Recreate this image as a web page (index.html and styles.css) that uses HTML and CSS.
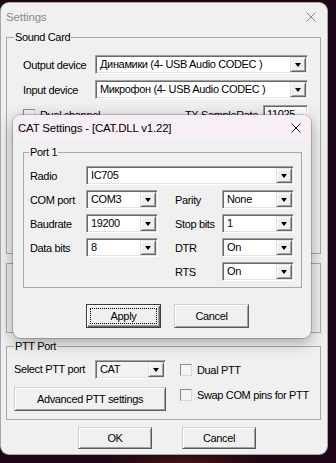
FILE: index.html
```html
<!DOCTYPE html>
<html lang="en">
<head>
<meta charset="UTF-8">
<meta name="viewport" content="width=device-width, initial-scale=1.0">
<title>Settings</title>
<link rel="stylesheet" href="styles.css">
</head>
<body>
<div class="desktop">
  <div class="window">
    <div class="titlebar">
      <span class="title">Settings</span>
      <svg class="close" width="10" height="10" viewBox="0 0 10 10"><path d="M0.5 0.5 L9.5 9.5 M9.5 0.5 L0.5 9.5" stroke="#8c8c8c" stroke-width="1"/></svg>
    </div>

    <fieldset class="group sound">
      <legend>Sound Card</legend>
      <div class="sound-body">
        <div class="row">
          <span class="label">Output device</span>
          <div class="combo"><span class="value">Динамики (4- USB Audio CODEC )</span><span class="drop"></span></div>
        </div>
        <div class="row">
          <span class="label">Input device</span>
          <div class="combo"><span class="value">Микрофон (4- USB Audio CODEC )</span><span class="drop"></span></div>
        </div>
        <div class="row">
          <label class="check"><span class="box"></span>Dual channel</label>
          <span class="tx-label">TX SampleRate</span>
          <div class="field">11025</div>
        </div>
      </div>
    </fieldset>

    <div class="group blank"></div>

    <fieldset class="group ptt">
      <legend>PTT Port</legend>
      <div class="ptt-body">
        <div class="ptt-left">
          <div class="row">
            <span class="label ptt-label">Select PTT port</span>
            <div class="combo gray"><span class="value">CAT</span><span class="drop"></span></div>
          </div>
          <button class="btn wide">Advanced PTT settings</button>
        </div>
        <div class="ptt-right">
          <label class="check first"><span class="box"></span>Dual PTT</label>
          <label class="check second"><span class="box"></span>Swap COM pins for PTT</label>
        </div>
      </div>
    </fieldset>

    <div class="actions">
      <button class="btn">OK</button>
      <button class="btn">Cancel</button>
    </div>

    <div class="dialog">
      <div class="dlg-title">
        <span>CAT Settings - [CAT.DLL v1.22]</span>
        <svg class="close" width="10" height="10" viewBox="0 0 10 10"><path d="M0.5 0.5 L9.5 9.5 M9.5 0.5 L0.5 9.5" stroke="#1a1a1a" stroke-width="1"/></svg>
      </div>
      <fieldset class="group port">
        <legend>Port 1</legend>
        <div class="port-grid">
          <span class="c1">Radio</span>
          <div class="combo wide-col"><span class="value">IC705</span><span class="drop"></span></div>

          <span class="c1">COM port</span>
          <div class="combo c2"><span class="value">COM3</span><span class="drop"></span></div>
          <span class="c4">Parity</span>
          <div class="combo c5"><span class="value">None</span><span class="drop"></span></div>

          <span class="c1">Baudrate</span>
          <div class="combo c2"><span class="value">19200</span><span class="drop"></span></div>
          <span class="c4">Stop bits</span>
          <div class="combo c5"><span class="value">1</span><span class="drop"></span></div>

          <span class="c1">Data bits</span>
          <div class="combo c2"><span class="value">8</span><span class="drop"></span></div>
          <span class="c4">DTR</span>
          <div class="combo c5"><span class="value">On</span><span class="drop"></span></div>

          <span class="c4">RTS</span>
          <div class="combo c5"><span class="value">On</span><span class="drop"></span></div>
        </div>
      </fieldset>
      <div class="dlg-actions">
        <button class="btn default"><span class="focus">Apply</span></button>
        <button class="btn">Cancel</button>
      </div>
    </div>
  </div>
</div>
</body>
</html>
```

FILE: styles.css
```css
* {
  box-sizing: border-box;
}
body {
  margin: 0;
  width: 336px;
  height: 463px;
  overflow: hidden;
  background: #1d0615;
  font-family: "Liberation Sans", Arial, sans-serif;
  font-size: 11px;
  letter-spacing: -0.35px;
  line-height: 14px;
  color: #000;
}
.desktop {
  height: 463px;
  padding: 3px 0 0 1px;
  background: radial-gradient(ellipse 90px 14px at 55% 100%, #4a1414 0, #2a0a14 60%, #1d0615 100%);
}
.window {
  position: relative;
  width: 326px;
  height: 451px;
  background: #f0f0f0;
  border-radius: 8px;
  box-shadow: 0 0 0 1px #a8a8a8;
}
.titlebar {
  height: 27px;
  display: flex;
  align-items: center;
  justify-content: space-between;
  padding: 0 11px 0 5px;
}
.title {
  font-size: 11.5px;
  letter-spacing: -0.1px;
  color: #8a8a8a;
}

/* group boxes */
.group {
  margin: 0 6px 0 5px;
  padding: 0;
  border: 1px solid #a9a9a9;
  min-width: 0;
}
.group legend {
  margin-left: 7px;
  padding: 0 1px;
  line-height: 14px;
}
.sound {
  height: 224px;
}
.sound-body {
  padding: 11px 12px 0 16px;
}
.row {
  display: flex;
  align-items: center;
  height: 19px;
  margin-bottom: 6px;
}
.label {
  width: 72px;
  flex: none;
}
.tx-label {
  margin-left: auto;
  margin-right: 5px;
}
.field {
  width: 45px;
  height: 19px;
  background: #fff;
  border: 1px solid;
  border-color: #a0a0a0 #fff #fff #a0a0a0;
  box-shadow: inset 1px 1px #696969, inset -1px -1px #e3e3e3;
  padding: 1px 3px;
}
.blank {
  height: 70px;
  margin-top: 9px;
}

/* combo boxes */
.combo {
  flex: 1;
  height: 19px;
  display: flex;
  align-items: stretch;
  background: #fff;
  border: 1px solid;
  border-color: #a0a0a0 #fff #fff #a0a0a0;
  box-shadow: inset 1px 1px #696969, inset -1px -1px #e3e3e3;
  padding: 1px;
  min-width: 0;
}
.combo.gray {
  background: #f3f3f3;
}
.combo .value {
  flex: 1;
  padding-left: 3px;
  white-space: nowrap;
  overflow: hidden;
  line-height: 15px;
}
.drop {
  width: 16px;
  flex: none;
  display: flex;
  align-items: center;
  justify-content: center;
  background: #f0f0f0;
  border: 1px solid;
  border-color: #e3e3e3 #696969 #696969 #e3e3e3;
  box-shadow: inset 1px 1px #fff, inset -1px -1px #a0a0a0;
}
.drop::after {
  content: "";
  border-left: 3.5px solid transparent;
  border-right: 3.5px solid transparent;
  border-top: 4px solid #000;
  margin-top: 1px;
}

/* checkboxes */
.check {
  display: flex;
  align-items: center;
  gap: 5px;
}
.box {
  width: 12px;
  height: 12px;
  flex: none;
  background: #f4f4f4;
  border: 1px solid;
  border-color: #8a8a8a #d8d8d8 #d8d8d8 #8a8a8a;
}

/* buttons */
.btn {
  font: inherit;
  letter-spacing: inherit;
  color: #000;
  background: #f0f0f0;
  border: 1px solid;
  border-color: #d0d0d0 #5a5a5a #5a5a5a #d0d0d0;
  box-shadow: inset 1px 1px #fff, inset -1px -1px #a0a0a0;
  padding: 0;
  width: 74px;
  height: 22px;
}
.btn.wide {
  width: 152px;
  height: 24px;
  margin-top: 8px;
}
.btn.default {
  border-color: #3c3c3c;
  box-shadow: inset 1px 1px #fff, inset -1px -1px #696969, inset -2px -2px #a0a0a0;
  display: flex;
  padding: 3px;
}
.focus {
  flex: 1;
  display: flex;
  align-items: center;
  justify-content: center;
  border: 1px dotted #000;
}

/* PTT */
.ptt {
  margin-top: 6px;
}
.ptt-body {
  display: flex;
  gap: 14px;
  padding: 6px 0 8px 7px;
}
.ptt-left {
  width: 152px;
}
.ptt-left .row {
  height: 20px;
  margin: 0;
}
.ptt-label {
  width: 81px;
}
.ptt-right .first {
  margin-top: 4px;
}
.ptt-right .second {
  margin-top: 11px;
}
.actions {
  display: flex;
  gap: 30px;
  padding-left: 77px;
  margin-top: 7px;
}

/* CAT dialog over the settings window */
.dialog {
  position: absolute;
  left: 12px;
  top: 112px;
  width: 298px;
  height: 223px;
  background: #f0f0f0;
  border-radius: 8px;
  overflow: hidden;
  box-shadow: 0 0 0 1px rgba(0, 0, 0, 0.18), 0 4px 16px rgba(0, 0, 0, 0.35);
}
.dlg-title {
  height: 25px;
  display: flex;
  align-items: center;
  justify-content: space-between;
  padding: 0 10px 0 5px;
  background: #f8eef5;
  font-size: 11.5px;
  letter-spacing: -0.2px;
}
.port {
  margin: 5px 9px 0 10px;
}
.port legend {
  margin-left: 5px;
}
.port-grid {
  display: grid;
  grid-template-columns: 56px 72px 17px 47px 72px;
  grid-auto-rows: 19px;
  row-gap: 5px;
  align-items: center;
  padding: 7px 8px 6px 6px;
}
.c1 { grid-column: 1; }
.c2 { grid-column: 2; }
.c4 { grid-column: 4; }
.c5 { grid-column: 5; }
.wide-col { grid-column: 2 / 6; }
.port-grid .combo {
  height: 19px;
}
.dlg-actions {
  display: flex;
  gap: 13px;
  padding-left: 73px;
  margin-top: 16px;
}
.dlg-actions .btn {
  width: 75px;
  height: 24px;
}
```
